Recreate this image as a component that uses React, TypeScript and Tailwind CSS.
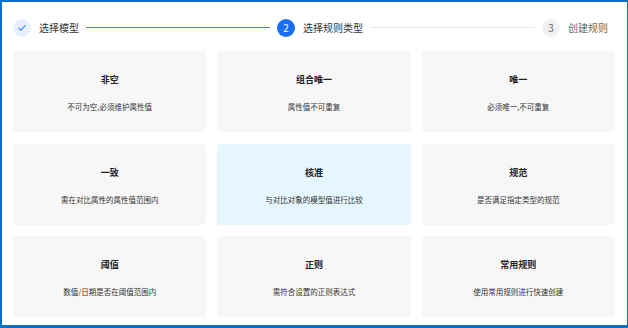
import { Check } from "lucide-react";

const rules = [
  { title: "非空", desc: "不可为空,必须维护属性值" },
  { title: "组合唯一", desc: "属性值不可重复" },
  { title: "唯一", desc: "必须唯一,不可重复" },
  { title: "一致", desc: "需在对比属性的属性值范围内" },
  { title: "核准", desc: "与对比对象的模型值进行比较", active: true },
  { title: "规范", desc: "是否满足指定类型的规范" },
  { title: "阈值", desc: "数值/日期是否在阈值范围内" },
  { title: "正则", desc: "需符合设置的正则表达式" },
  { title: "常用规则", desc: "使用常用规则进行快速创建" },
];

export default function App() {
  return (
    <div
      className="w-[628px] h-[328px] bg-white border-l-2 border-t-2 border-b-[3px] border-r border-[#0b6fc4] mr-px box-border overflow-hidden"
      style={{ fontFamily: '"Noto Sans CJK SC", "Noto Sans", sans-serif' }}
    >
      {/* Steps */}
      <div className="flex items-center h-[23px] mt-[14px] pl-[11px] pr-[19px]">
        <div className="flex items-center gap-2">
          <div className="w-[18px] h-[18px] rounded-full bg-[#e8f0fd] flex items-center justify-center">
            <Check className="w-[10px] h-[10px] text-[#1677ff]" strokeWidth={2.5} />
          </div>
          <span className="text-[10px] text-[#333]">选择模型</span>
        </div>
        <div className="w-[184px] h-px bg-[#4a86d8] ml-[7px] mr-[7px]" />
        <div className="flex items-center gap-2">
          <div className="w-[18px] h-[18px] rounded-full bg-[#1a6ef5] flex items-center justify-center text-[10px] text-white">
            2
          </div>
          <span className="text-[10px] text-[#333]">选择规则类型</span>
        </div>
        <div className="flex-1 h-px bg-[#e8e8e8] mx-[7px]" />
        <div className="flex items-center gap-2">
          <div className="w-[18px] h-[18px] rounded-full bg-[#f2f2f2] flex items-center justify-center text-[10px] text-[#666]">
            3
          </div>
          <span className="text-[10px] text-[#666]">创建规则</span>
        </div>
      </div>

      {/* Rule cards */}
      <div className="grid grid-cols-3 gap-x-[11px] gap-y-[11.5px] pl-[11px] pr-[12px] mt-[12px]">
        {rules.map((r) => (
          <div
            key={r.title}
            className={`h-[81px] rounded-[4px] flex flex-col items-center pt-[22px] ${
              r.active ? "bg-[#e6f6ff]" : "bg-[#f7f7f7]"
            }`}
          >
            <div className="text-[9px] font-bold text-[#222] leading-[14px]">{r.title}</div>
            <div className="text-[7.5px] text-[#333] leading-[12px] mt-[14px]">{r.desc}</div>
          </div>
        ))}
      </div>
    </div>
  );
}
